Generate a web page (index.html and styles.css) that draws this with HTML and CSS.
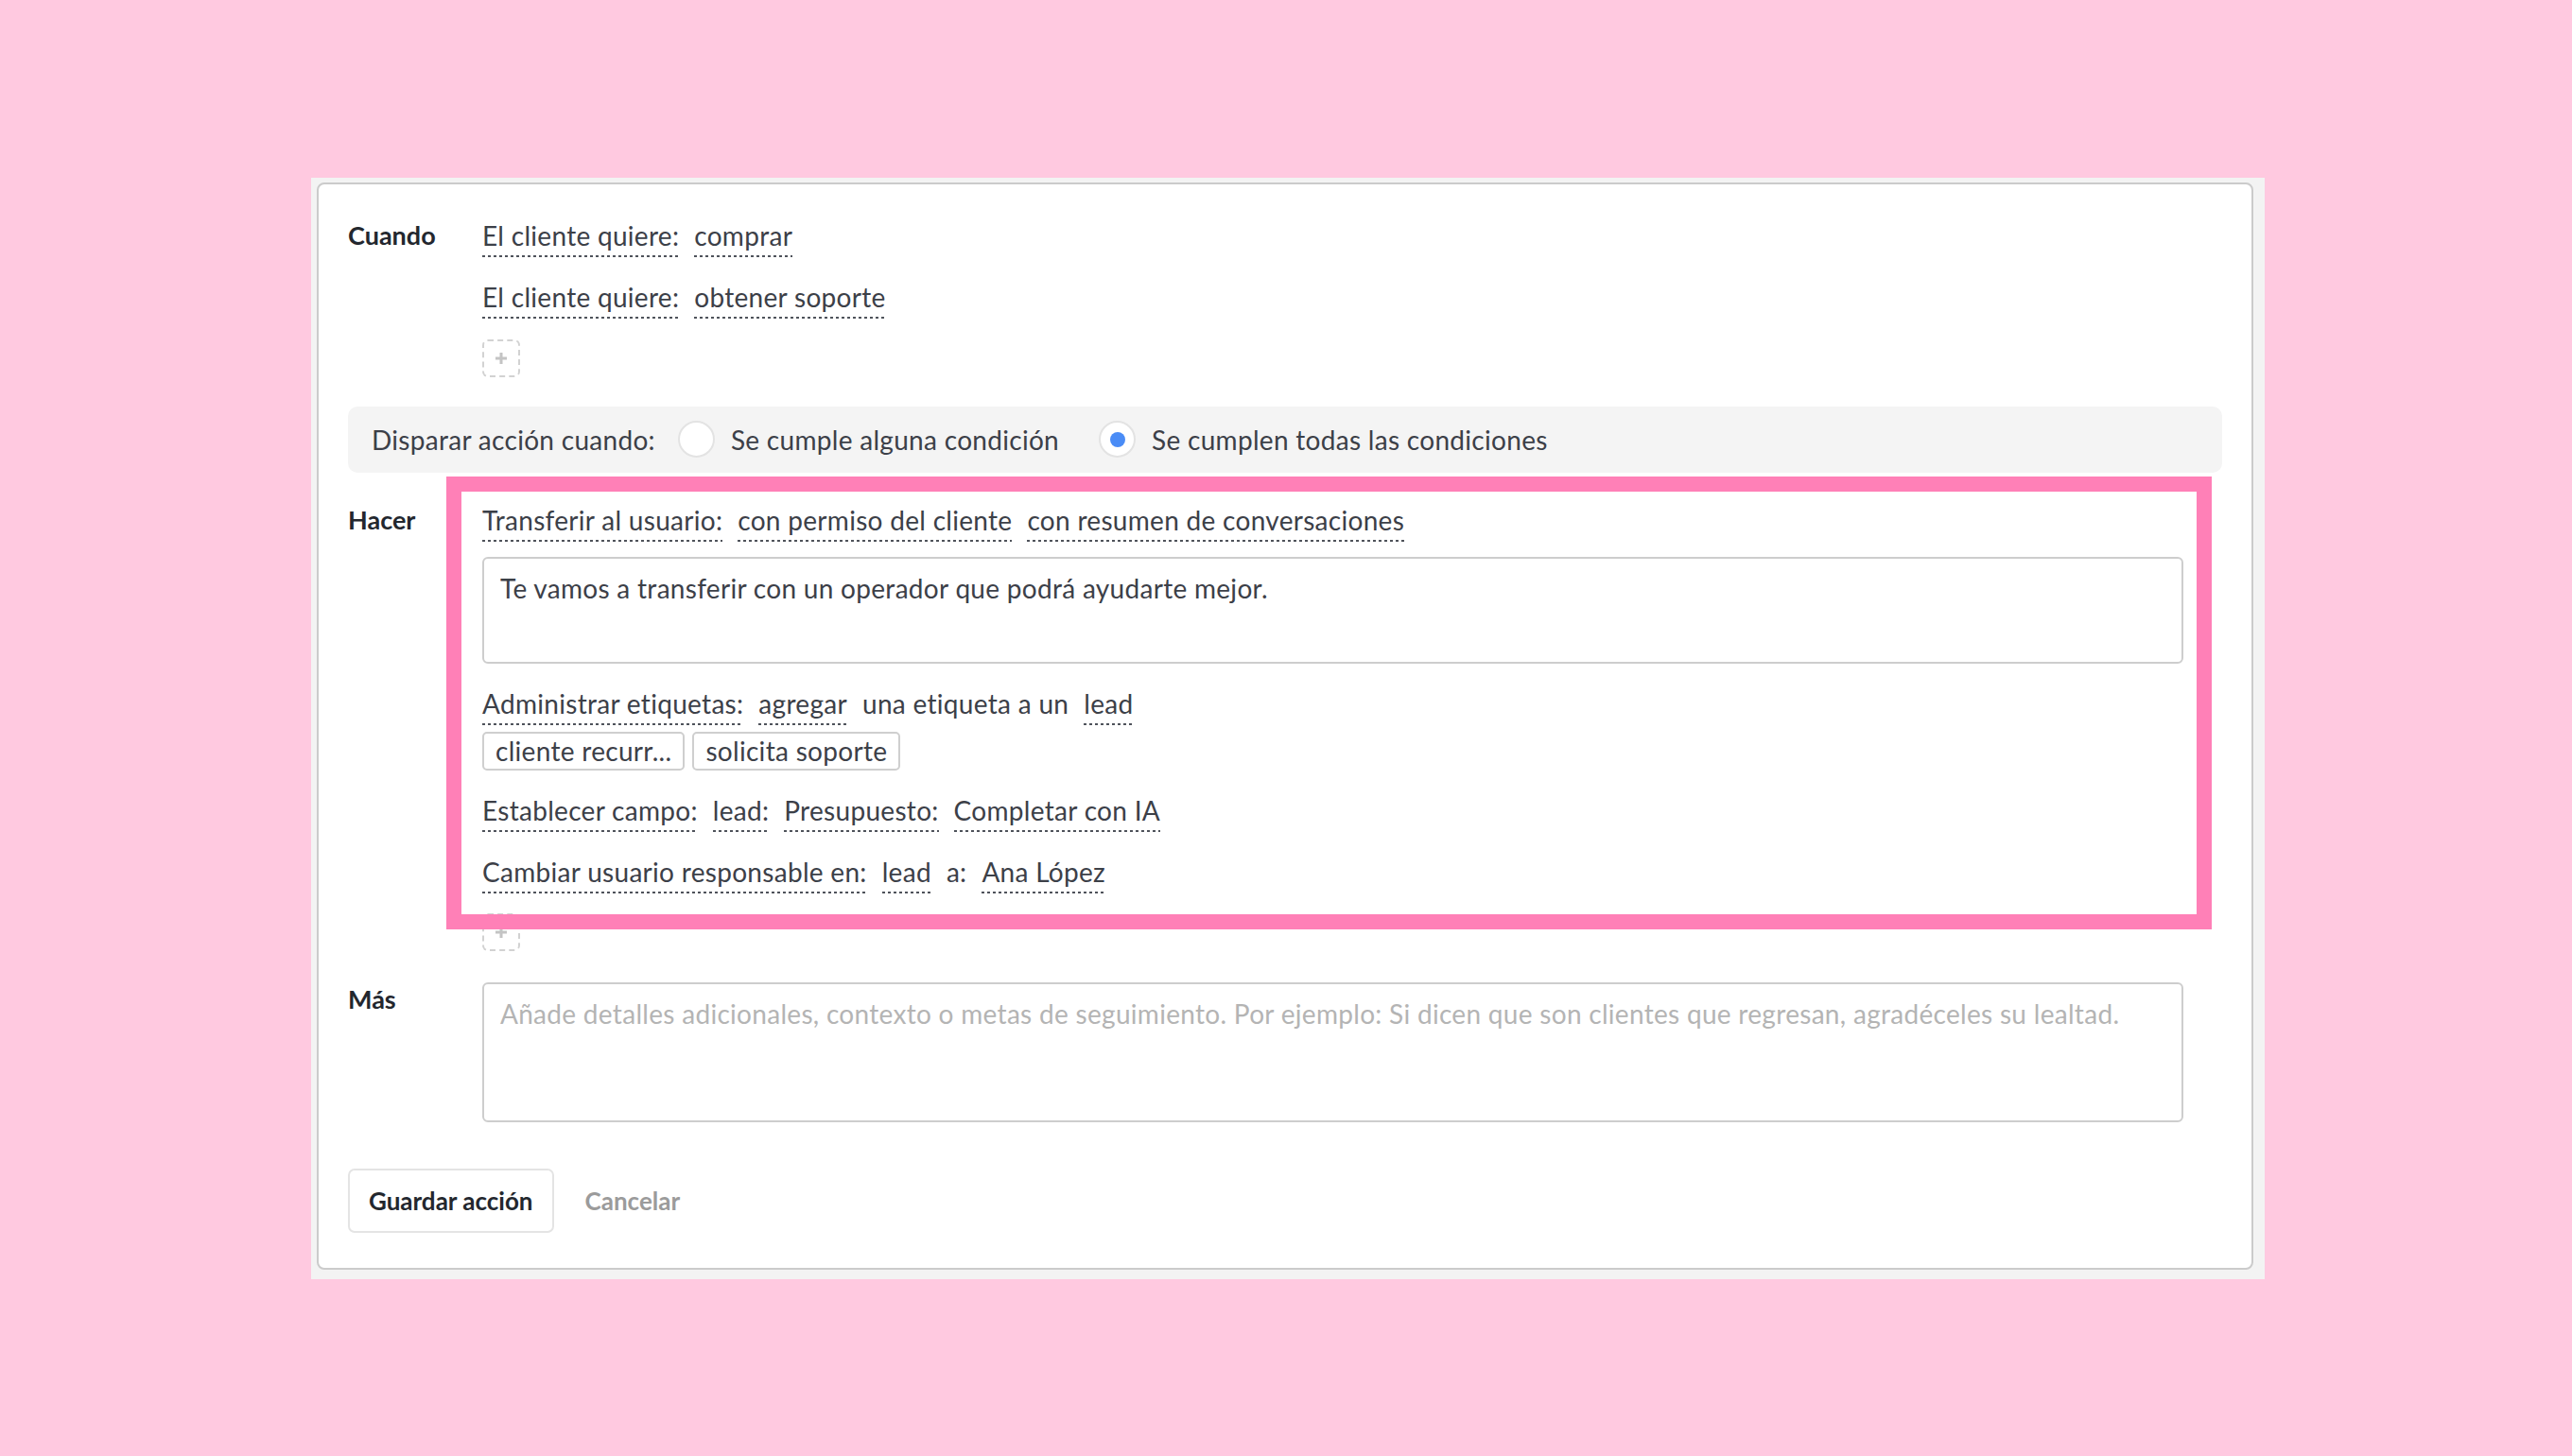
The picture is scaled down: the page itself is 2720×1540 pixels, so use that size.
FILE: index.html
```html
<!DOCTYPE html>
<html lang="es">
<head>
    <meta charset="UTF-8">
    <meta name="viewport" content="width=device-width, initial-scale=1.0">
    <title>Acción del bot</title>
    <link rel="stylesheet" href="styles.css">
</head>
<body>
    <div class="frame">
        <div class="card">

            <div class="section">
                <div class="section-label">Cuando</div>
                <div class="section-body">
                    <div class="rule">
                        <span class="token">El cliente quiere:</span>
                        <span class="token">comprar</span>
                    </div>
                    <div class="rule">
                        <span class="token">El cliente quiere:</span>
                        <span class="token">obtener soporte</span>
                    </div>
                    <button class="add-btn" title="Añadir condición">
                        <svg width="16" height="16" viewBox="0 0 16 16"><path d="M8 2v12M2 8h12" stroke="#c4c4c4" stroke-width="3"/></svg>
                    </button>
                </div>
            </div>

            <div class="trigger">
                <span class="trigger-title">Disparar acción cuando:</span>
                <label class="option">
                    <span class="radio"></span>
                    Se cumple alguna condición
                </label>
                <label class="option">
                    <span class="radio checked"></span>
                    Se cumplen todas las condiciones
                </label>
            </div>

            <div class="section section-do">
                <div class="section-label">Hacer</div>
                <div class="section-body">
                    <div class="rule">
                        <span class="token">Transferir al usuario:</span>
                        <span class="token">con permiso del cliente</span>
                        <span class="token">con resumen de conversaciones</span>
                    </div>
                    <textarea class="field field-message">Te vamos a transferir con un operador que podrá ayudarte mejor.</textarea>

                    <div class="rule">
                        <span class="token">Administrar etiquetas:</span>
                        <span class="token">agregar</span>
                        <span class="plain">una etiqueta a un</span>
                        <span class="token">lead</span>
                    </div>
                    <div class="tags">
                        <span class="tag">cliente recurr...</span>
                        <span class="tag">solicita soporte</span>
                    </div>

                    <div class="rule">
                        <span class="token">Establecer campo:</span>
                        <span class="token">lead:</span>
                        <span class="token">Presupuesto:</span>
                        <span class="token">Completar con IA</span>
                    </div>
                    <div class="rule">
                        <span class="token">Cambiar usuario responsable en:</span>
                        <span class="token">lead</span>
                        <span class="plain">a:</span>
                        <span class="token">Ana López</span>
                    </div>
                    <button class="add-btn add-btn-last" title="Añadir acción">
                        <svg width="16" height="16" viewBox="0 0 16 16"><path d="M8 2v12M2 8h12" stroke="#c4c4c4" stroke-width="3"/></svg>
                    </button>

                    <!-- marco de resaltado sobre las acciones -->
                    <div class="highlight"></div>
                </div>
            </div>

            <div class="section section-more">
                <div class="section-label">Más</div>
                <div class="section-body">
                    <textarea class="field field-more" placeholder="Añade detalles adicionales, contexto o metas de seguimiento. Por ejemplo: Si dicen que son clientes que regresan, agradéceles su lealtad."></textarea>
                </div>
            </div>

            <div class="actions">
                <button class="btn-save">Guardar acción</button>
                <button class="btn-cancel">Cancelar</button>
            </div>

        </div>
    </div>
</body>
</html>
```

FILE: styles.css
```css
body {
    margin: 0;
    min-height: 100vh;
    display: flex;
    align-items: center;
    justify-content: center;
    background-color: #ffc9e0;
    font-family: "Lato", "Open Sans", sans-serif;
    font-size: 28px;
    letter-spacing: 0.3px;
    color: #3c4048;
}
.frame {
    width: 2066px;
    margin-left: 4px;
    padding: 5px 12px 10px 6px;
    box-sizing: border-box;
    background-color: #f3f3f3;
}
.card {
    background-color: white;
    border: 2px solid #cbcbcb;
    border-radius: 8px;
    padding: 36px 31px 37px 31px;
}
.section {
    display: flex;
    align-items: flex-start;
}
.section-label {
    width: 142px;
    flex-shrink: 0;
    line-height: 36px;
    font-weight: bold;
    font-size: 27px;
    letter-spacing: 0;
    color: #23272e;
}
.section-body {
    flex: 1;
    margin-right: 41px;
    position: relative;
}
.rule {
    display: flex;
    flex-wrap: wrap;
    gap: 16px;
    margin-top: 24px;
}
.rule:first-child {
    margin-top: 0;
}
.token, .plain {
    line-height: 36px;
    padding-bottom: 5px;
    white-space: nowrap;
}
.token {
    cursor: pointer;
    background-image: linear-gradient(to right, #4f535b 55%, transparent 55%);
    background-size: 6px 2px;
    background-repeat: repeat-x;
    background-position: left bottom;
}
.add-btn {
    display: flex;
    align-items: center;
    justify-content: center;
    width: 40px;
    height: 40px;
    margin-top: 22px;
    padding: 0;
    background: white;
    border: 2px dashed #d2d2d2;
    border-radius: 6px;
    cursor: pointer;
}
.add-btn-last {
    margin-top: 21px;
}
.trigger {
    display: flex;
    align-items: center;
    height: 70px;
    margin-top: 31px;
    padding-left: 25px;
    background-color: #f4f4f4;
    border-radius: 10px;
}
.trigger-title {
    margin-right: 24px;
}
.option {
    display: flex;
    align-items: center;
    gap: 17px;
    margin-right: 42px;
    cursor: pointer;
}
.radio {
    width: 39px;
    height: 39px;
    box-sizing: border-box;
    border: 2px solid #e3e3e3;
    border-radius: 50%;
    background: white;
    display: flex;
    align-items: center;
    justify-content: center;
}
.radio.checked::after {
    content: "";
    width: 16px;
    height: 16px;
    border-radius: 50%;
    background-color: #4a8cf6;
}
.section-do {
    margin-top: 32px;
}
.field {
    display: block;
    width: 100%;
    box-sizing: border-box;
    padding: 13px 17px;
    border: 2px solid #cdcdcd;
    border-radius: 6px;
    font-family: inherit;
    font-size: 28px;
    letter-spacing: 0.3px;
    line-height: 36px;
    color: #3c4048;
    resize: none;
    outline: none;
}
.field::placeholder {
    color: #b4b4b4;
}
.field-message {
    height: 113px;
    margin-top: 16px;
    margin-bottom: 24px;
}
.field-more {
    height: 148px;
}
.tags {
    display: flex;
    gap: 8px;
    margin-top: 7px;
}
.tag {
    line-height: 37px;
    padding: 0 12px;
    border: 2px solid #cfcfcf;
    border-radius: 5px;
}
.tags + .rule {
    margin-top: 24px;
}
.highlight {
    position: absolute;
    top: -28px;
    left: -38px;
    right: -30px;
    bottom: 23px;
    border: 16px solid #ff80b7;
    pointer-events: none;
}
.section-more {
    margin-top: 33px;
}
.actions {
    display: flex;
    align-items: center;
    margin-top: 49px;
}
.btn-save {
    height: 68px;
    padding: 0 20px;
    background: white;
    border: 2px solid #e4e4e4;
    border-radius: 7px;
    font-family: inherit;
    font-size: 26px;
    font-weight: bold;
    color: #23272e;
    cursor: pointer;
}
.btn-cancel {
    margin-left: 33px;
    padding: 0;
    background: none;
    border: none;
    font-family: inherit;
    font-size: 26px;
    font-weight: bold;
    color: #9b9b9b;
    cursor: pointer;
}
```
